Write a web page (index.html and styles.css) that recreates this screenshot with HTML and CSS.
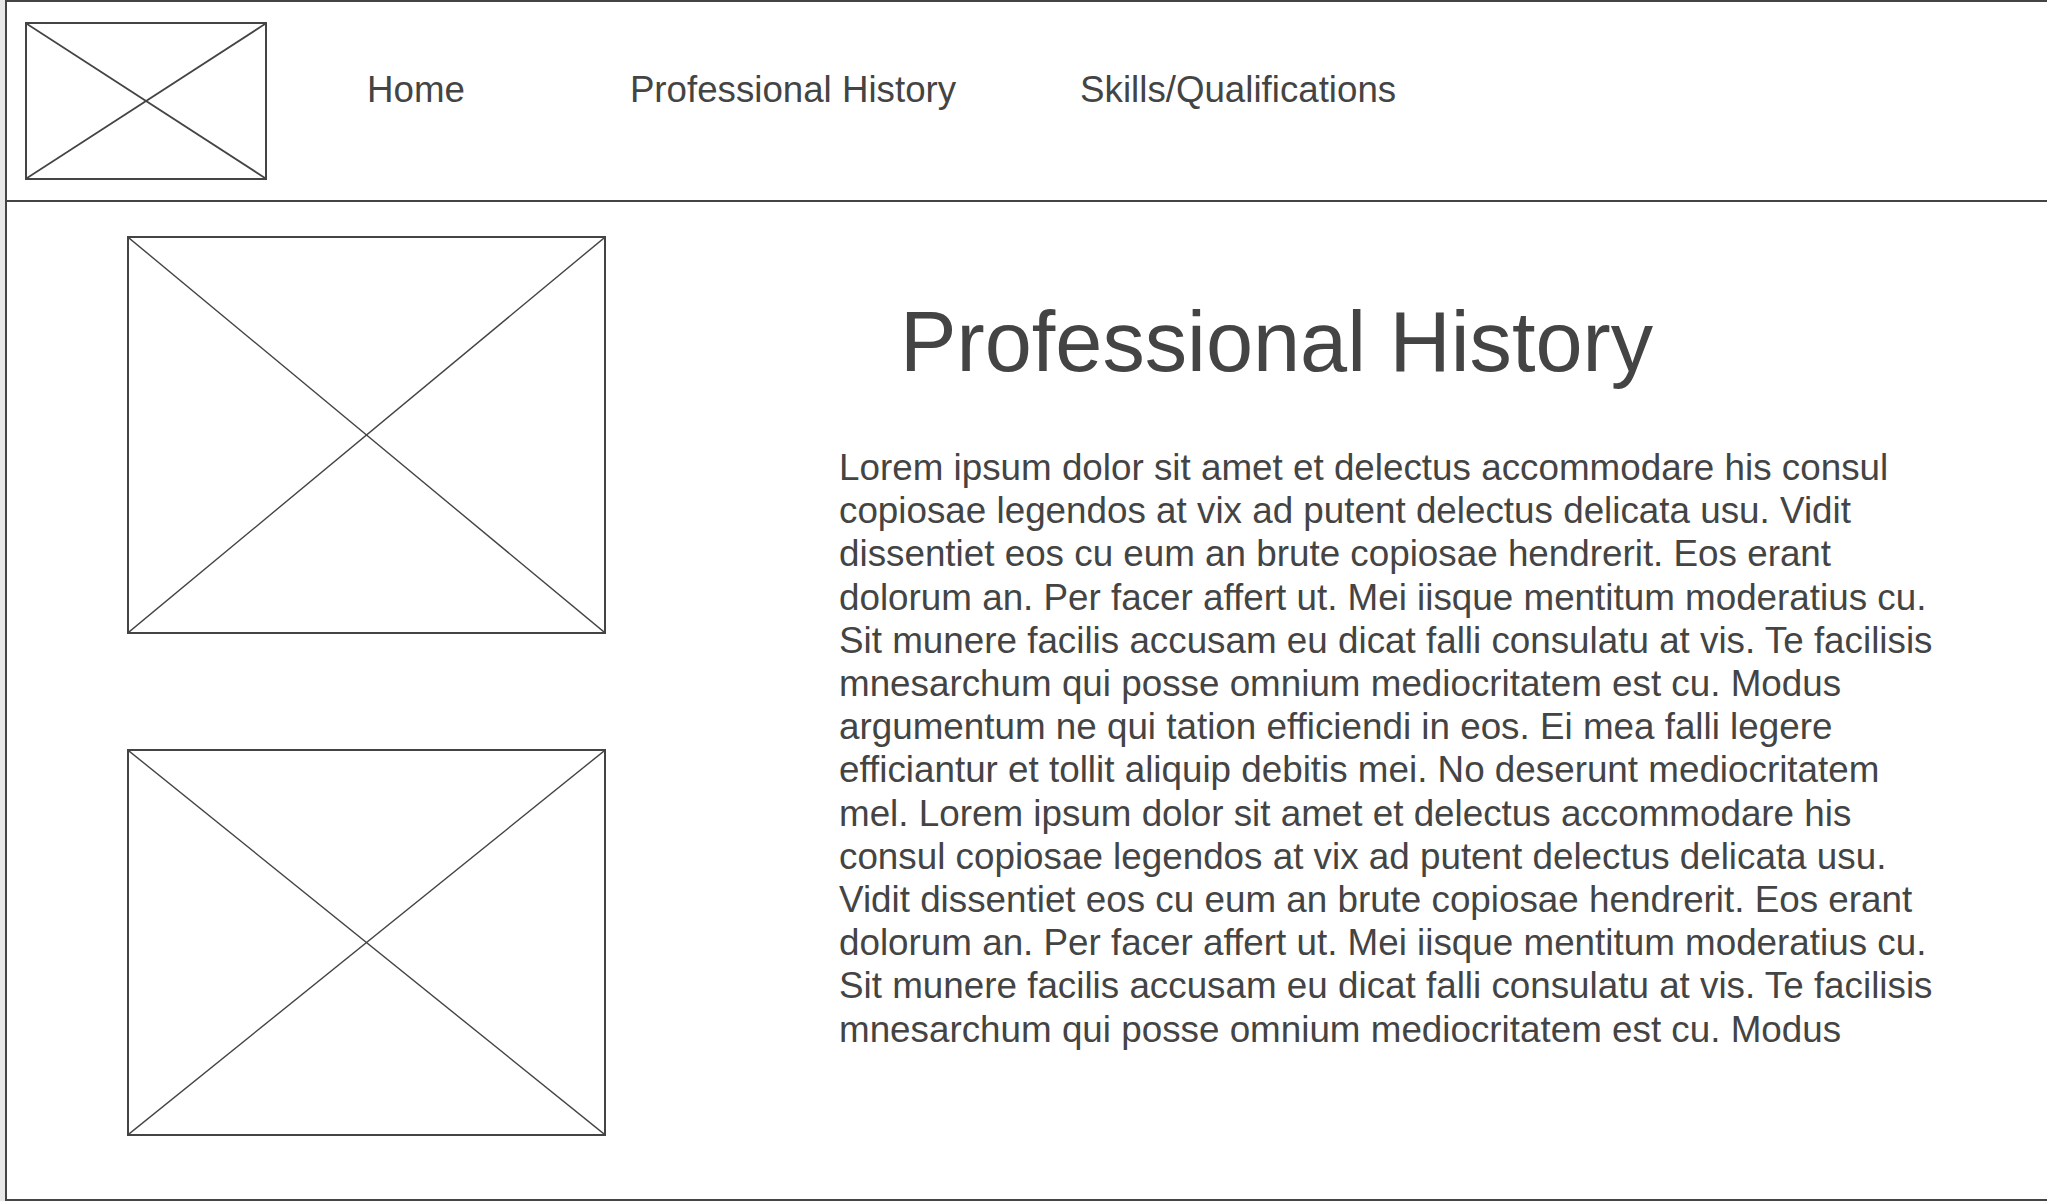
FILE: index.html
```html
<!DOCTYPE html>
<html>
<head>
<meta charset="utf-8">
<link rel="stylesheet" href="styles.css">
</head>
<body>
<div class="page">
  <div class="frame">
    <header class="header">
      <div class="logo ph">
        <svg class="ph-x" viewBox="0 0 100 100" preserveAspectRatio="none"><line x1="0" y1="0" x2="100" y2="100"/><line x1="100" y1="0" x2="0" y2="100"/></svg>
      </div>
      <nav class="nav">
        <a class="nav-link nav-home">Home</a>
        <a class="nav-link nav-history">Professional History</a>
        <a class="nav-link nav-skills">Skills/Qualifications</a>
      </nav>
    </header>
    <main class="main">
      <div class="side">
        <div class="photo photo-1 ph">
          <svg class="ph-x thin" viewBox="0 0 100 100" preserveAspectRatio="none"><line x1="0" y1="0" x2="100" y2="100"/><line x1="100" y1="0" x2="0" y2="100"/></svg>
        </div>
        <div class="photo photo-2 ph">
          <svg class="ph-x thin" viewBox="0 0 100 100" preserveAspectRatio="none"><line x1="0" y1="0" x2="100" y2="100"/><line x1="100" y1="0" x2="0" y2="100"/></svg>
        </div>
      </div>
      <section class="content">
        <h1 class="title">Professional History</h1>
        <p class="body-text">Lorem ipsum dolor sit amet et delectus accommodare his consul copiosae legendos at vix ad putent delectus delicata usu. Vidit dissentiet eos cu eum an brute copiosae hendrerit. Eos erant dolorum an. Per facer affert ut. Mei iisque mentitum moderatius cu. Sit munere facilis accusam eu dicat falli consulatu at vis. Te facilisis mnesarchum qui posse omnium mediocritatem est cu. Modus argumentum ne qui tation efficiendi in eos. Ei mea falli legere efficiantur et tollit aliquip debitis mei. No deserunt mediocritatem mel. Lorem ipsum dolor sit amet et delectus accommodare his consul copiosae legendos at vix ad putent delectus delicata usu. Vidit dissentiet eos cu eum an brute copiosae hendrerit. Eos erant dolorum an. Per facer affert ut. Mei iisque mentitum moderatius cu. Sit munere facilis accusam eu dicat falli consulatu at vis. Te facilisis mnesarchum qui posse omnium mediocritatem est cu. Modus</p>
      </section>
    </main>
  </div>
</div>
</body>
</html>
```
FILE: styles.css
```css
html, body {
  margin: 0;
  padding: 0;
  background: #ffffff;
}
body {
  width: 2047px;
  height: 1201px;
  overflow: hidden;
  font-family: "Liberation Sans", Arial, sans-serif;
  color: #444444;
}
.page {
  height: 1201px;
  padding-left: 5px;
  background: #e8e8e8;
  box-sizing: border-box;
}
.frame {
  height: 1201px;
  box-sizing: border-box;
  background: #ffffff;
  border-top: 2px solid #444444;
  border-left: 2px solid #444444;
  border-bottom: 2px solid #444444;
  display: flex;
  flex-direction: column;
}
.header {
  height: 198px;
  flex: none;
  border-bottom: 2px solid #444444;
  display: flex;
  align-items: flex-start;
}
.ph {
  position: relative;
  box-sizing: border-box;
  border: 2px solid #444444;
  flex: none;
}
.ph-x {
  display: block;
  width: 100%;
  height: 100%;
}
.ph-x line {
  stroke: #444444;
  stroke-width: 1.8;
  vector-effect: non-scaling-stroke;
}
.ph-x.thin line {
  stroke-width: 1.4;
}
.logo {
  width: 242px;
  height: 158px;
  margin-left: 18px;
  margin-top: 20px;
}
.nav {
  display: flex;
  margin-left: 100px;
  margin-top: 67px;
}
.nav-link {
  font-size: 36.7px;
  line-height: 42px;
  color: #444444;
  text-decoration: none;
}
.nav-history {
  margin-left: 165px;
}
.nav-skills {
  margin-left: 124px;
}
.main {
  flex: 1;
  display: flex;
  align-items: flex-start;
}
.side {
  display: flex;
  flex-direction: column;
  margin-left: 120px;
  padding-top: 34px;
  gap: 115px;
}
.photo {
  width: 479px;
}
.photo-1 {
  height: 398px;
}
.photo-2 {
  height: 387px;
}
.content {
  margin-left: 233px;
  width: 1111px;
}
.title {
  margin: 98px 0 0 61px;
  font-size: 84.7px;
  line-height: 84px;
  font-weight: normal;
  color: #444444;
}
.body-text {
  margin: 62px 0 0 0;
  font-size: 36.8px;
  line-height: 43.2px;
  color: #444444;
}
```
